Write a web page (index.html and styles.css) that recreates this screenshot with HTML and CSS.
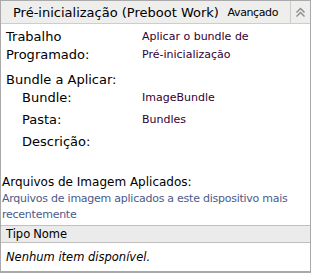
FILE: index.html
```html
<!DOCTYPE html>
<html lang="pt">
<head>
  <meta charset="UTF-8">
  <title>Pré-inicialização</title>
  <link rel="stylesheet" href="styles.css">
</head>
<body>
  <div class="panel">
    <div class="panel-head">
      <span class="title">Pré-inicialização (Preboot Work)</span>
      <span class="adv">Avançado</span>
      <span class="toggle">
        <svg width="11" height="11" viewBox="0 0 11 11"><path d="M1.5 5.5 L5.5 1.5 L9.5 5.5 M1.5 9.5 L5.5 5.5 L9.5 9.5" fill="none" stroke="#8a8a8a" stroke-width="1.4"/></svg>
      </span>
    </div>
    <div class="panel-body">
      <div class="row first">
        <div class="label">Trabalho Programado:</div>
        <div class="value">Aplicar o bundle de Pré-inicialização</div>
      </div>
      <div class="row group">
        <div class="label">Bundle a Aplicar:</div>
      </div>
      <div class="row sub">
        <div class="label">Bundle:</div>
        <div class="value">ImageBundle</div>
      </div>
      <div class="row sub">
        <div class="label">Pasta:</div>
        <div class="value">Bundles</div>
      </div>
      <div class="row sub">
        <div class="label">Descrição:</div>
        <div class="value"></div>
      </div>
      <div class="section">Arquivos de Imagem Aplicados:</div>
      <div class="desc">Arquivos de imagem aplicados a este dispositivo mais recentemente</div>
    </div>
    <table class="grid">
      <thead>
        <tr><th>Tipo</th><th>Nome</th></tr>
      </thead>
      <tbody>
        <tr><td colspan="2" class="empty">Nenhum item disponível.</td></tr>
      </tbody>
    </table>
  </div>
</body>
</html>
```
FILE: styles.css
```css
body { margin: 0; font-family: "DejaVu Sans", Verdana, sans-serif; font-size: 13px; color: #000; background: #fff; }
.panel { width: 309px; border: 1px solid #aaa; border-bottom-width: 2px; }
.panel-head { display: flex; align-items: center; height: 22px; background: #eeeeec; border-bottom: 1px solid #cdcdcd; }
.title { flex: 1; padding-left: 12px; font-size: 13px; }
.adv { padding-right: 12px; font-size: 11px; letter-spacing: -0.4px; }
.toggle { width: 19px; height: 22px; border-left: 1px solid #cdcdcd; display: flex; align-items: center; justify-content: center; }
.panel-body { padding: 4px 4px 2px 0; }
.row { display: flex; line-height: 18px; margin-bottom: 4px; }
.row.first { margin-bottom: 7px; }
.row.group { margin-bottom: 0; }
.label { width: 136px; padding-left: 5px; }
.value { flex: 1; max-width: 125px; color: #330033; font-size: 11px; }
.row.sub .label { width: 120px; padding-left: 21px; }
.section { margin-top: 22px; line-height: 18px; font-size: 12px; padding-left: 1px; }
.desc { color: #4a5a8a; line-height: 16px; font-size: 11px; letter-spacing: -0.25px; padding-left: 1px; }
.grid { width: 100%; border-collapse: collapse; font-size: 11.5px; }
.grid th { background: #ebebeb; border-top: 1px solid #c0c0c0; border-bottom: 1px solid #c0c0c0; text-align: left; font-weight: normal; padding: 0 0 0 5px; height: 16px; }
.grid th + th { padding-left: 3px; width: 100%; }
.grid td.empty { font-style: italic; padding: 0 5px; height: 28px; }
```
